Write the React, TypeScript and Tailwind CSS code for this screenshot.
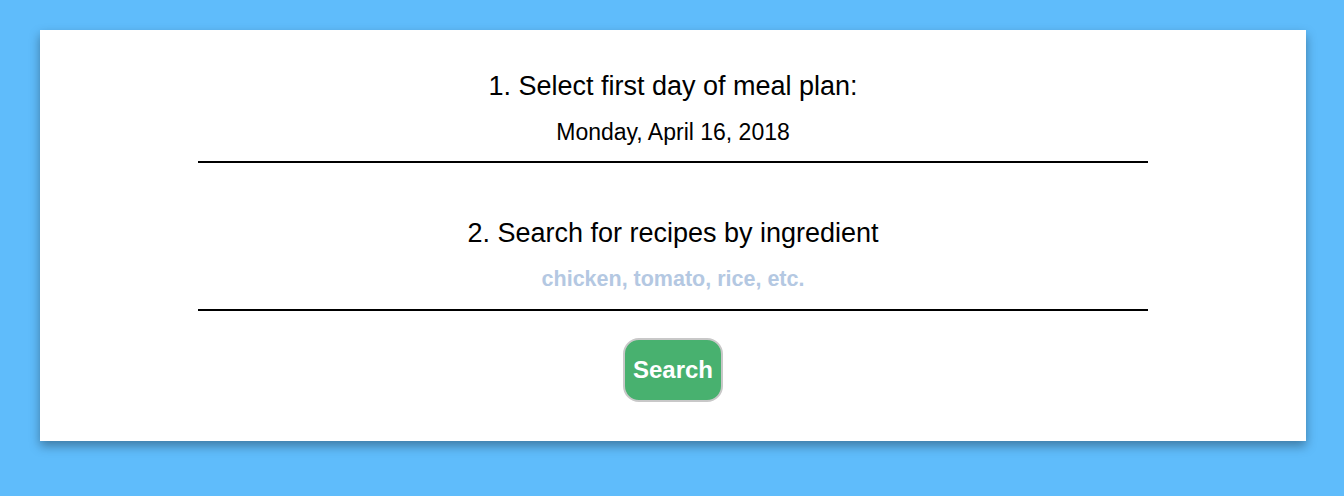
import React from 'react';

export default function App() {
    return (
        <div className="w-[1344px] h-[496px] bg-[#5fbcfb] pt-[30px] font-['Liberation_Sans',Arial,sans-serif]">
            <div className="ml-[40px] w-[1266px] h-[411px] bg-white shadow-[0_5px_10px_rgba(0,0,0,0.35)] flex flex-col items-center pt-[40px]">
                <h2 className="text-[27px] leading-[32px] text-black">1. Select first day of meal plan:</h2>
                <div className="mt-[17px] text-[23px] leading-[26px] text-black">Monday, April 16, 2018</div>
                <div className="mt-[16px] w-[950px] h-[2px] bg-black" />
                <h2 className="mt-[54px] text-[27px] leading-[32px] text-black">2. Search for recipes by ingredient</h2>
                <div className="mt-[17px] text-[21.5px] leading-[26px] font-bold text-[#b4c8e2]">chicken, tomato, rice, etc.</div>
                <div className="mt-[17px] w-[950px] h-[2px] bg-black" />
                <button className="mt-[27px] w-[100px] h-[64px] rounded-[16px] border-2 border-[#c8c8c8] bg-[#48b16f] text-white text-[24px] font-bold">
                    Search
                </button>
            </div>
        </div>
    );
}
